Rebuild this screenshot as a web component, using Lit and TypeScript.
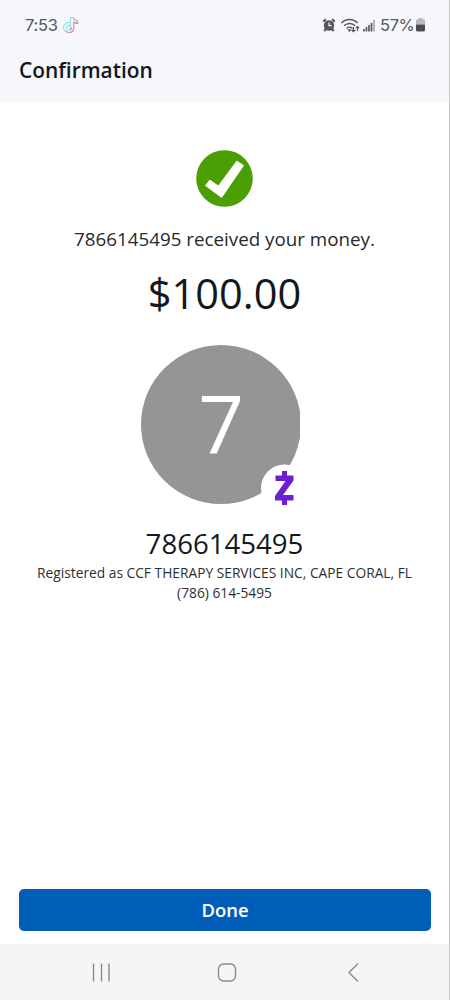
import { LitElement, html, css } from "lit";
import { customElement, property } from "lit/decorators.js";

// top strip with the clock and the phone's indicators
@customElement("status-bar")
export class StatusBar extends LitElement {
  @property() time = "";
  @property() battery = "";

  static styles = css`
    :host {
      display: flex;
      align-items: center;
      height: 50px;
      padding: 0 24px 0 25px;
      box-sizing: border-box;
      font-family: Inter, "Liberation Sans", sans-serif;
      font-size: 16.5px;
      color: #55575a;
    }
    svg {
      display: block;
      flex: none;
    }
    .time {
      width: 33px;
      white-space: nowrap;
      letter-spacing: -0.3px;
    }
    .note {
      margin-left: 4px;
    }
    .indicators {
      margin-left: auto;
    }
    .battery {
      width: 34px;
      margin-left: 4px;
      white-space: nowrap;
      letter-spacing: -0.4px;
    }
    .cell {
      margin-left: 2px;
    }
  `;

  render() {
    return html`
      <span class="time">${this.time}</span>
      <svg class="note" width="18" height="18" viewBox="0 0 18 18" fill="none" stroke-width="1.1">
        <path stroke="#8fe0e4" d="M8 6.500C4.500 6 1.500 8.300 1.500 11.500c0 1.500.7 3 2 4M8.500 12V1.500h3M8 9.500c-2-.5-3.500.6-3.500 2.200 0 1 .6 1.700 1.400 2"/>
        <path stroke="#c58a9f" d="M11.500 1.500c.3 2 1.500 3.200 4 3.500v2.500c-1.500 0-2.700-.5-3.700-1.200V11.500c0 3-2 5-4.800 5-1.500 0-2.700-.5-3.500-1.300M9.500 11.500c0 1.500-.9 2.400-2.200 2.400"/>
      </svg>
      <svg class="indicators" width="54" height="18" viewBox="0 0 54 18" fill="none" stroke="#55575a">
        <circle cx="7" cy="9.500" r="5.200" fill="#55575a" stroke="none"/>
        <path stroke-width="2.200" d="M1.300 5.800 4 3.300M12.700 5.800 10 3.300M3.800 13 2.300 15M10.200 13l1.500 2"/>
        <path stroke="#f5f7fa" stroke-width="1.200" d="M7 6.500v3.200h2.600"/>
        <path stroke-width="1.500" d="M19.500 7c4.500-4.700 11.500-4.700 16 0M22 9.800c3.200-3.200 8-3.200 11.200 0M24.500 12.500c1.700-1.700 4.300-1.700 6 0"/>
        <path fill="#55575a" stroke="none" d="M25.500 13.800q2-1.500 4 0l-2 2.200z"/>
        <path stroke-width="1.200" d="M31.500 11v4.500M29.800 14l1.700 1.700 1.700-1.700M35.500 15V10.500M33.800 12.200l1.700-1.700 1.700 1.700"/>
        <path stroke-width="1.700" d="M42 15.500v-2.500M44.500 15.500v-4.500M47 15.500V9M49.500 15.500V7"/>
        <path stroke="#a9abae" stroke-width="1.700" d="M52 15.500V4"/>
      </svg>
      <span class="battery">${this.battery}</span>
      <svg class="cell" width="9" height="14" viewBox="0 0 9 14">
        <path fill="#b7b9bc" d="M2.500 0h4v1.500H8q1 0 1 1V6.500H0V2.500q0-1 1-1h1.500z"/>
        <path fill="#4b4c4f" d="M0 6.500h9v5.500Q9 13.500 7 13.500H2q-2 0-2-1.500z"/>
      </svg>
    `;
  }
}

// round initial with the payment service's mark in its corner
@customElement("contact-avatar")
export class ContactAvatar extends LitElement {
  @property() initial = "";

  static styles = css`
    :host {
      display: block;
      position: relative;
      width: 159px;
      height: 159px;
    }
    .frame {
      overflow: hidden;
    }
    .circle {
      width: 160px;
      height: 159px;
      border-radius: 50%;
      background: #959595;
      color: #fff;
      text-align: center;
      font-size: 80px;
      line-height: 155px;
    }
    .badge {
      position: absolute;
      left: 119px;
      top: 119px;
      width: 48px;
      height: 48px;
    }
  `;

  render() {
    return html`
      <div class="frame">
        <div class="circle">${this.initial}</div>
      </div>
      <svg class="badge" viewBox="0 0 48 48">
        <circle cx="24.500" cy="24" r="23.500" fill="#fff"/>
        <path fill="#6a1fd0" d="M22 7h5v4.500h6.500v5L23 31h10.500v5.500H27V41h-5v-4.500h-7V32l10.500-15H15.500v-5.500H22z"/>
      </svg>
    `;
  }
}

@customElement("app-root")
export class AppRoot extends LitElement {
  static styles = css`
    :host {
      display: flex;
      flex-direction: column;
      width: 450px;
      height: 1000px;
      box-sizing: border-box;
      border-right: 1px solid #c4c5c7;
      overflow: hidden;
      background: #fff;
      color: #12181d;
      font-family: "Open Sans", "Noto Sans", sans-serif;
    }
    .header {
      height: 102px;
      background: #f5f7fa;
    }
    h1 {
      margin: 0;
      padding-left: 19px;
      font-size: 20.9px;
      font-weight: 600;
      line-height: 41px;
    }
    main {
      flex: 1;
      display: flex;
      flex-direction: column;
      align-items: center;
      padding-top: 48px;
      white-space: nowrap;
    }
    .check {
      display: block;
    }
    .message {
      margin-top: 18px;
      font-size: 18.8px;
      line-height: 28px;
      color: #25292d;
    }
    .amount {
      margin-top: 12px;
      font-size: 41.5px;
      line-height: 56px;
    }
    contact-avatar {
      margin: 24px 8px 0 0;
    }
    .name {
      margin: 20px 0 1px;
      font-size: 27.6px;
      line-height: 38px;
    }
    .detail {
      font-size: 13.78px;
      line-height: 20px;
      color: #2b2f33;
    }
    button {
      height: 42px;
      margin: 0 18px 13px 19px;
      border: 0;
      border-radius: 5px;
      background: #005eb8;
      color: #fff;
      font: 600 18.4px/42px "Open Sans", sans-serif;
      padding: 0;
    }
    nav {
      height: 56px;
      background: #f5f5f7;
    }
    nav svg {
      display: block;
    }
  `;

  render() {
    return html`
      <div class="header">
        <status-bar time="7:53" battery="57%"></status-bar>
        <h1>Confirmation</h1>
      </div>
      <main>
        <svg class="check" width="57" height="57" viewBox="0 0 57 57">
          <circle cx="28.500" cy="28.500" r="28.300" fill="#4a9f05"/>
          <path fill="#fff" stroke="#fff" stroke-width="1.500" stroke-linejoin="round" d="M10 35.500 14 30.500 22.500 36.500 41 11.500 47 15.500 25.500 47z"/>
        </svg>
        <div class="message">7866145495 received your money.</div>
        <div class="amount">$100.00</div>
        <contact-avatar initial="7"></contact-avatar>
        <div class="name">7866145495</div>
        <div class="detail">Registered as CCF THERAPY SERVICES INC, CAPE CORAL, FL</div>
        <div class="detail">(786) 614-5495</div>
      </main>
      <button>Done</button>
      <nav>
        <svg width="449" height="56" viewBox="0 0 449 56" fill="none" stroke="#8b8b8d" stroke-width="1.400">
          <path d="M93.500 19.500v18M101.500 19.500v18M109 19.500v18"/>
          <rect x="218.500" y="20" width="17" height="17" rx="5"/>
          <path d="M358 19.500l-9 9 9 9"/>
        </svg>
      </nav>
    `;
  }
}
